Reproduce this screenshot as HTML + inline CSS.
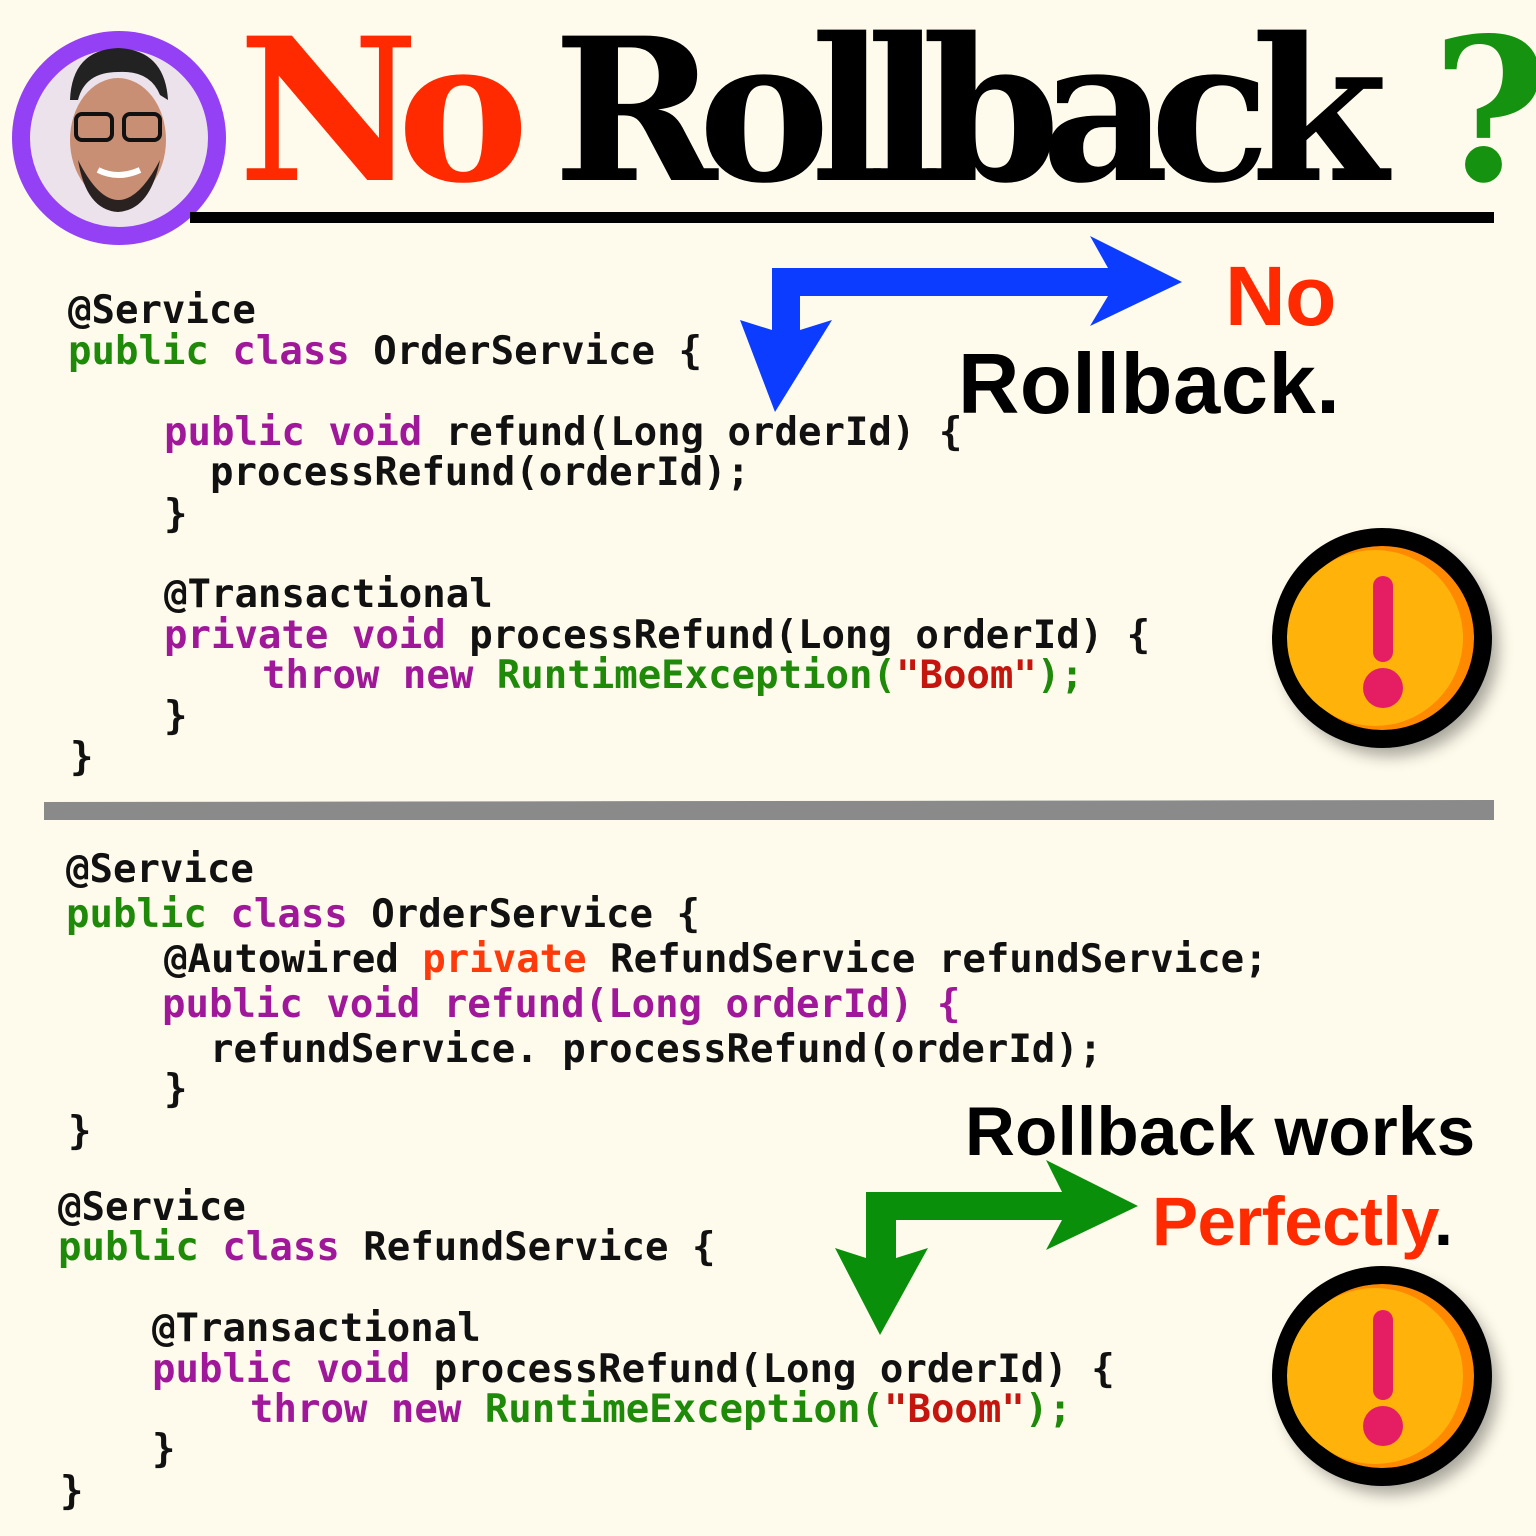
<!DOCTYPE html>
<html><head><meta charset="utf-8"><style>
body{margin:0;width:1536px;height:1536px;background:#fffbec;position:relative;overflow:hidden}
.c{position:absolute;font-family:"DejaVu Sans Mono","Liberation Mono",monospace;font-weight:bold;font-size:39px;line-height:40px;white-space:pre;color:#111}
.g{color:#1f8a0a}.p{color:#a0189a}.r{color:#ff3a0a}.s{color:#c4160e}
.t{position:absolute;font-family:"DejaVu Serif","Liberation Serif",serif;font-weight:bold;white-space:pre}
.h{position:absolute;font-family:"Liberation Sans",sans-serif;font-weight:bold;white-space:pre;letter-spacing:-0.5px}
</style></head><body>
<svg style="position:absolute;left:0;top:0" width="240" height="260">
<circle cx="119" cy="138" r="98" fill="#ece2ec" stroke="#9440f5" stroke-width="18"/>
<ellipse cx="118" cy="140" rx="48" ry="62" fill="#c98f74"/>
<path d="M70 100 Q72 50 118 48 Q165 50 168 100 L160 95 Q150 70 118 72 Q85 72 78 100Z" fill="#222"/>
<path d="M78 160 Q118 240 160 160 Q150 210 118 212 Q86 210 78 160Z" fill="#2a2220"/>
<rect x="76" y="114" width="36" height="26" rx="6" fill="none" stroke="#111" stroke-width="4"/>
<rect x="124" y="114" width="36" height="26" rx="6" fill="none" stroke="#111" stroke-width="4"/>
<path d="M98 170 Q118 180 140 170" stroke="#fff" stroke-width="6" fill="none"/>
</svg>
<div class="t" style="left:238px;top:-6px;font-size:198px;color:#ff2a00;letter-spacing:-22px">No</div>
<div class="t" style="left:553px;top:-6px;font-size:198px;color:#000;letter-spacing:-19.5px">Rollback</div>
<div class="t" style="left:1432px;top:-6px;font-size:198px;color:#15920f">?</div>
<div style="position:absolute;left:190px;top:212px;width:1304px;height:11px;background:#000"></div>

<svg style="position:absolute;left:0;top:0" width="1536" height="1536">
<path d="M775 412 L740 320 L772 330 L772 268 L1108 268 L1090 236 L1182 282 L1090 326 L1108 296 L800 296 L800 330 L832 320 Z" fill="#0c3cff"/>
<path d="M880 1335 L835 1248 L866 1258 L866 1192 L1062 1192 L1046 1160 L1138 1206 L1046 1250 L1062 1220 L896 1220 L896 1258 L928 1248 Z" fill="#0a8f0a"/>
<defs><filter id="sh"><feGaussianBlur stdDeviation="8"/></filter></defs>
<g>
<circle cx="1390" cy="648" r="108" fill="#000" opacity=".35" filter="url(#sh)"/>
<circle cx="1382" cy="638" r="110" fill="#000"/>
<circle cx="1382" cy="638" r="92" fill="#ff8a00"/>
<circle cx="1375" cy="638" r="88" fill="#ffb30a"/>
<line x1="1383" y1="586" x2="1383" y2="652" stroke="#e51d63" stroke-width="20" stroke-linecap="round"/>
<circle cx="1383" cy="688" r="20" fill="#e51d63"/>
</g>
<g>
<circle cx="1390" cy="1386" r="108" fill="#000" opacity=".35" filter="url(#sh)"/>
<circle cx="1382" cy="1376" r="110" fill="#000"/>
<circle cx="1382" cy="1376" r="92" fill="#ff8a00"/>
<circle cx="1375" cy="1376" r="88" fill="#ffb30a"/>
<line x1="1383" y1="1320" x2="1383" y2="1390" stroke="#e51d63" stroke-width="20" stroke-linecap="round"/>
<circle cx="1383" cy="1426" r="20" fill="#e51d63"/>
</g>
<path d="M44 802 L1494 800 L1494 820 L44 820Z" fill="#8a8a8a"/>
</svg>

<div class="h" style="left:1225px;top:248px;font-size:84px;color:#ff2a00">No</div>
<div class="h" style="left:958px;top:336px;font-size:85px;color:#000;letter-spacing:0.5px">Rollback.</div>
<div class="h" style="left:965px;top:1092px;font-size:69px;color:#000;letter-spacing:0.3px">Rollback works</div>
<div class="h" style="left:1152px;top:1182px;font-size:69px;color:#ff2a00">Perfectly<span style="color:#000">.</span></div>

<div class="c" style="left:68px;top:291px">@Service</div>
<div class="c" style="left:68px;top:332px"><span class="g">public</span> <span class="p">class</span> OrderService {</div>
<div class="c" style="left:164px;top:413px"><span class="p">public void</span> refund(Long orderId) {</div>
<div class="c" style="left:210px;top:453px">processRefund(orderId);</div>
<div class="c" style="left:164px;top:495px">}</div>
<div class="c" style="left:164px;top:575px">@Transactional</div>
<div class="c" style="left:164px;top:616px"><span class="p">private void</span> processRefund(Long orderId) {</div>
<div class="c" style="left:262px;top:656px"><span class="p">throw new</span> <span class="g">RuntimeException(</span><span class="s">"Boom"</span><span class="g">);</span></div>
<div class="c" style="left:164px;top:697px">}</div>
<div class="c" style="left:70px;top:738px">}</div>

<div class="c" style="left:66px;top:850px">@Service</div>
<div class="c" style="left:66px;top:895px"><span class="g">public</span> <span class="p">class</span> OrderService {</div>
<div class="c" style="left:164px;top:940px">@Autowired <span class="r">private</span> RefundService refundService;</div>
<div class="c p" style="left:162px;top:985px">public void refund(Long orderId) {</div>
<div class="c" style="left:210px;top:1030px">refundService. processRefund(orderId);</div>
<div class="c" style="left:164px;top:1070px">}</div>
<div class="c" style="left:68px;top:1112px">}</div>

<div class="c" style="left:58px;top:1188px">@Service</div>
<div class="c" style="left:58px;top:1228px"><span class="g">public</span> <span class="p">class</span> RefundService {</div>
<div class="c" style="left:152px;top:1309px">@Transactional</div>
<div class="c" style="left:152px;top:1350px"><span class="p">public void</span> processRefund(Long orderId) {</div>
<div class="c" style="left:250px;top:1390px"><span class="p">throw new</span> <span class="g">RuntimeException(</span><span class="s">"Boom"</span><span class="g">);</span></div>
<div class="c" style="left:152px;top:1430px">}</div>
<div class="c" style="left:60px;top:1472px">}</div>
</body></html>
